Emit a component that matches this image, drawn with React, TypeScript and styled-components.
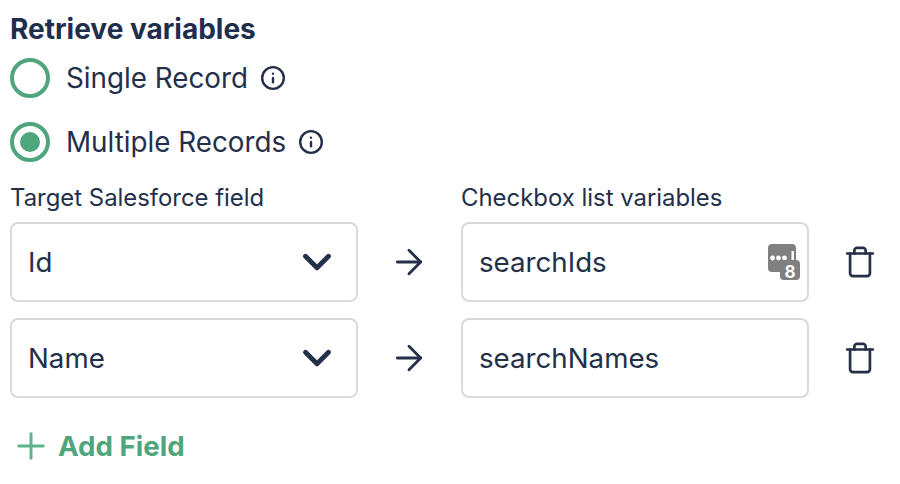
import React from "react";
import styled, { createGlobalStyle } from "styled-components";
import { ArrowRight, ChevronDown, Info, Plus, Trash } from "lucide-react";

const GlobalStyle = createGlobalStyle`
  html, body {
    margin: 0;
    background: #fff;
    overflow: hidden;
  }
  body {
    font-family: Inter, "Liberation Sans", sans-serif;
    color: #242f49;
  }
`;

const COLUMNS = "348px 103px 348px 1fr";

const Page = styled.div`
  width: 900px;
  height: 484px;
  box-sizing: border-box;
  padding: 13px 0 0 10px;
`;

const Title = styled.h2`
  margin: 0;
  font-size: 28px;
  line-height: 32px;
  font-weight: 700;
  color: #1f2e4d;
`;

const RadioGroup = styled.div`
  display: flex;
  flex-direction: column;
  gap: 24px;
  margin-top: 13px;
`;

const RadioRow = styled.label`
  display: flex;
  align-items: center;
  height: 40px;
  font-size: 27.8px;
`;

const RadioCircle = styled.span<{ $checked?: boolean }>`
  width: 40px;
  height: 40px;
  box-sizing: border-box;
  border: 4px solid #4fa67c;
  border-radius: 50%;
  margin-right: 16px;
  display: flex;
  align-items: center;
  justify-content: center;
  &::after {
    content: "";
    display: ${(p) => (p.$checked ? "block" : "none")};
    width: 20px;
    height: 20px;
    border-radius: 50%;
    background: #4fa67c;
  }
`;

const InfoIcon = styled(Info)`
  margin-left: 12px;
  width: 26px;
  height: 26px;
  stroke-width: 2.2;
`;

const ColumnHeader = styled.div`
  display: grid;
  grid-template-columns: ${COLUMNS};
  margin: 23px 0 11px;
`;

const ColumnLabel = styled.div<{ $column: number }>`
  grid-column: ${(p) => p.$column};
  font-size: 23.9px;
  line-height: 26px;
`;

const FieldRows = styled.div`
  display: grid;
  grid-template-columns: ${COLUMNS};
  grid-auto-rows: 80px;
  row-gap: 16px;
`;

const FieldBox = styled.div`
  box-sizing: border-box;
  border: 2px solid #d9d9df;
  border-radius: 8px;
  padding: 0 16px;
  display: flex;
  align-items: center;
  justify-content: space-between;
  font-size: 27.7px;
  background: #fff;
`;

const Chevron = styled(ChevronDown)`
  width: 46px;
  height: 46px;
  stroke-width: 2.5;
`;

const ArrowCell = styled.div`
  display: flex;
  align-items: center;
  justify-content: center;
  padding-right: 2px;
`;

const TrashCell = styled.div`
  display: flex;
  align-items: center;
  justify-content: center;
  padding-left: 10px;
`;

const Arrow = styled(ArrowRight)`
  width: 40px;
  height: 40px;
  stroke-width: 1.7;
`;

const TrashIcon = styled(Trash)`
  width: 34px;
  height: 34px;
  stroke-width: 1.9;
`;

const AddButton = styled.button`
  display: flex;
  align-items: center;
  gap: 6px;
  margin: 27px 0 0 0;
  padding: 0;
  border: 0;
  background: none;
  font-family: inherit;
  font-size: 27.7px;
  line-height: 36px;
  font-weight: 700;
  color: #4fa67c;
`;

const PlusIcon = styled(Plus)`
  width: 42px;
  height: 42px;
  stroke-width: 1.7;
  color: #5cb489;
`;

const BadgeSvg = styled.svg`
  width: 34px;
  height: 38px;
  margin-right: -9px;
`;

// grey "8 numbers" marker from the variable input
const NumberBadge = () => (
  <BadgeSvg viewBox="0 0 34 38">
    <rect x="2" y="1" width="28" height="28" rx="4" fill="#808080" />
    <circle cx="6.5" cy="15" r="2.4" fill="#fff" />
    <circle cx="12.5" cy="15" r="2.4" fill="#fff" />
    <circle cx="18.5" cy="15" r="2.4" fill="#fff" />
    <rect x="25.5" y="8" width="2.4" height="9" fill="#fff" />
    <rect x="14" y="17" width="20" height="20" rx="4" fill="#808080" />
    <text x="24" y="34.5" textAnchor="middle" fontFamily="Inter, sans-serif" fontWeight="700" fontSize="17" fill="#fff">
      8
    </text>
  </BadgeSvg>
);

const rows = [
  { field: "Id", variable: "searchIds", badge: true },
  { field: "Name", variable: "searchNames", badge: false },
];

export default function App() {
  return (
    <Page>
      <GlobalStyle />
      <Title>Retrieve variables</Title>
      <RadioGroup>
        <RadioRow>
          <RadioCircle />
          Single Record
          <InfoIcon />
        </RadioRow>
        <RadioRow>
          <RadioCircle $checked />
          Multiple Records
          <InfoIcon />
        </RadioRow>
      </RadioGroup>
      <ColumnHeader>
        <ColumnLabel $column={1}>Target Salesforce field</ColumnLabel>
        <ColumnLabel $column={3}>Checkbox list variables</ColumnLabel>
      </ColumnHeader>
      <FieldRows>
        {rows.map((row) => (
          <React.Fragment key={row.field}>
            <FieldBox>
              {row.field}
              <Chevron />
            </FieldBox>
            <ArrowCell>
              <Arrow />
            </ArrowCell>
            <FieldBox>
              {row.variable}
              {row.badge && <NumberBadge />}
            </FieldBox>
            <TrashCell>
              <TrashIcon />
            </TrashCell>
          </React.Fragment>
        ))}
      </FieldRows>
      <AddButton>
        <PlusIcon />
        Add Field
      </AddButton>
    </Page>
  );
}
